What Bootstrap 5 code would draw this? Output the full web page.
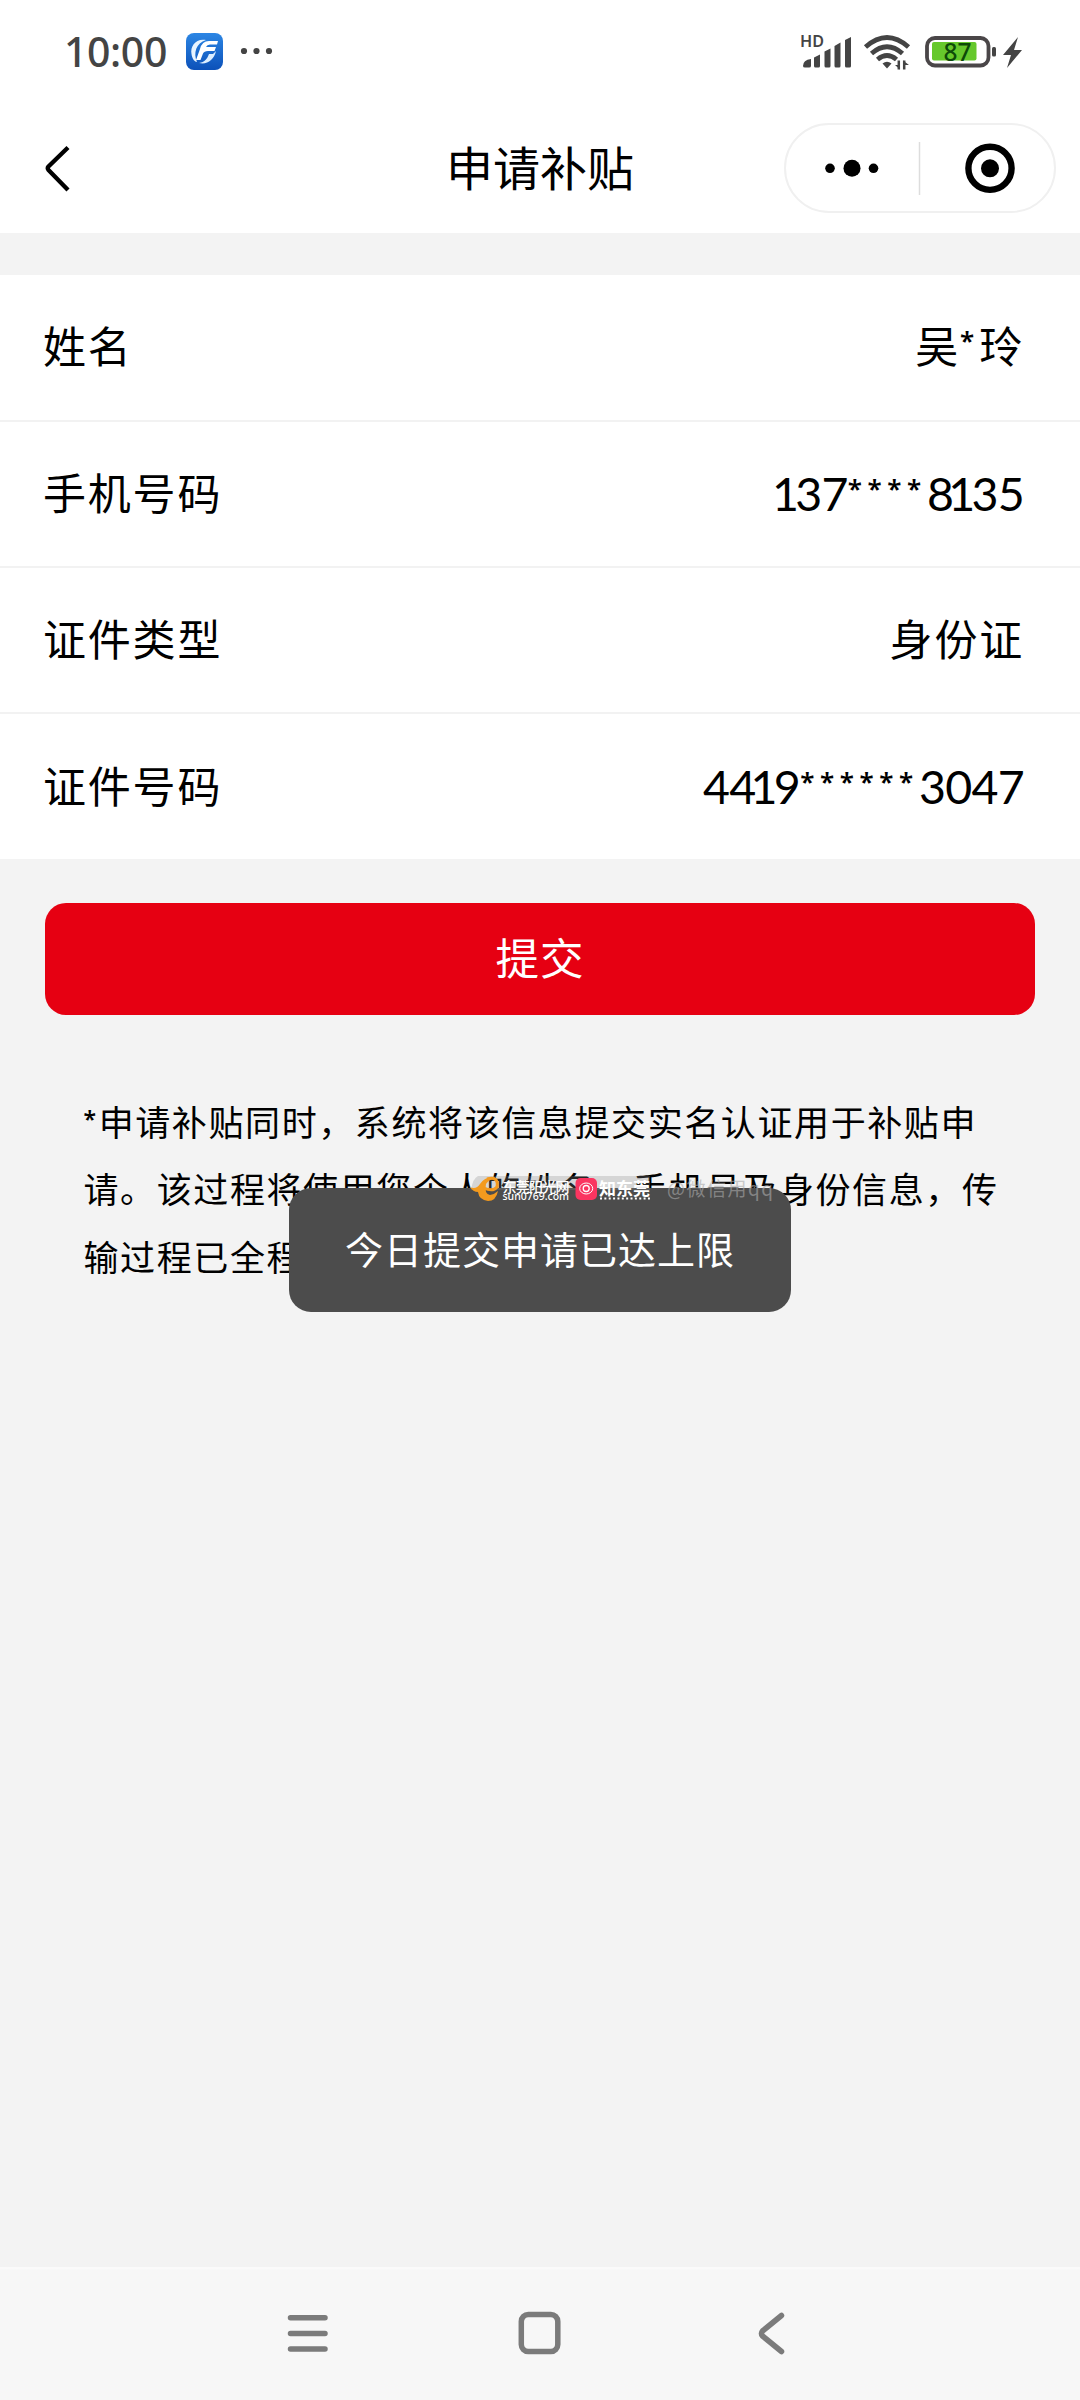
<!DOCTYPE html>
<html lang="zh-CN">
<head>
<meta charset="utf-8">
<meta name="viewport" content="width=device-width, initial-scale=1">
<title>申请补贴</title>
<link rel="stylesheet" href="https://cdn.jsdelivr.net/npm/bootstrap@5.3.0/dist/css/bootstrap.min.css">
<style>
body{background:#f3f3f3;color:#000;font-family:"Noto Sans CJK SC",sans-serif;line-height:1}
.screen{width:1080px;height:2400px;overflow:hidden}
.status{height:103px;padding:0 56px 0 64px}
.clock{font:500 41px/60px "Noto Sans",sans-serif;color:#444;width:122px;letter-spacing:-.4px;padding-bottom:2px}
.titlebar{height:130px;padding:0 24px 0 44px}
.side{flex:1 1 0}
.page-title{font-size:47px;line-height:60px;white-space:nowrap;padding:0 0 4px;margin-left:-20px}
.capsule{width:272px;height:90px;border:2px solid #f0f0f0}
.form-rows{margin-top:42px}
.form-rows .list-group-item{height:146px;padding:0 56px 6px 43px;border:0;border-bottom:2px solid #f2f2f2;font-size:43px;letter-spacing:1.8px;color:#000}
.form-rows .list-group-item:first-child{height:147px;padding-bottom:7px}
.form-rows .list-group-item:last-child{height:145px;border-bottom:0;padding-bottom:4px}
.digits{font-family:Lato,"Noto Sans CJK SC",sans-serif;font-size:46.5px;letter-spacing:-.7px;font-kerning:none;padding-top:4px}
.digits i,.star{font-style:normal;font-weight:600;font-family:"Noto Sans","Noto Sans CJK SC",sans-serif;font-size:26px;line-height:0;vertical-align:13px;letter-spacing:5.6px}
.star{letter-spacing:5px}
.notice .star{font-size:23px;vertical-align:8px;letter-spacing:2.6px}
.one{margin-left:-5px;margin-right:-3px}
.btn-send{height:112px;margin:44px 45px 0;padding:0 0 5px;border:0;border-radius:21px;background:#e60012;color:#fff;font-size:43.5px;letter-spacing:1px}
.btn-send:hover{background:#e60012;color:#fff}
.notice{margin:72px 0 0 83.500px;font-size:35px;line-height:67.3px;letter-spacing:1.6px;white-space:nowrap}
.hint{left:289px;top:1188px;width:502px;height:124px;padding-bottom:4px;border-radius:22px;background:#4c4c4c;color:#fff;font-size:38px;letter-spacing:1px}
.stamp{left:466px;top:1174px}
.sysbar{height:133px;background:#f7f7f7}
</style>
<script src="https://cdn.jsdelivr.net/npm/bootstrap@5.3.0/dist/js/bootstrap.bundle.min.js"></script>
</head>
<body>
<div class="screen position-relative d-flex flex-column">
  <header class="bg-white">
    <div class="status d-flex align-items-center">
      <span class="clock">10:00</span>
      <svg width="90" height="38" viewBox="186 33 90 38">
        <defs><linearGradient id="blue" x2="0" y2="1"><stop stop-color="#2c86e4"/><stop offset="1" stop-color="#0c51b9"/></linearGradient></defs>
        <rect x="186" y="33" width="37" height="37" rx="8" fill="url(#blue)"/>
        <path d="M206 40C196 38 190 46 191.500 54C192 59 195 62 197 62C193 53 196 43 206 40Z" fill="#e8f4ff"/>
        <path d="M218 41H209Q202 41 200 49L196 60H200.500L203 53.500Q204 51 208 51H214.500L216 47H206Q207 44.500 210 44.500H217Z" fill="#fff"/>
        <path d="M216 51C214 60 207 65 199 63C205 62 207 59 209 54H213Z" fill="#dceeff"/>
        <g fill="#444"><circle cx="244" cy="51" r="3.100"/><circle cx="256.500" cy="51" r="3.100"/><circle cx="269" cy="51" r="3.100"/></g>
      </svg>
      <svg class="ms-auto overflow-visible" width="224" height="40" viewBox="800 32 224 40" fill="#444">
        <text x="800" y="47.300" font-family="Noto Sans,sans-serif" font-weight="600" font-size="16" textLength="24" lengthAdjust="spacingAndGlyphs">HD</text>
        <path d="M803 66Q803 60 811 59V66Q811 67.500 809 67.500H805Q803 67.500 803 66ZM814 57.500L820 54.500V66Q820 67.500 818.500 67.500H815.500Q814 67.500 814 66ZM824.500 51.500L830.500 48.500V66Q830.500 67.500 829 67.500H826Q824.500 67.500 824.500 66ZM834.500 46L840.500 42.500V66Q840.500 67.500 839 67.500H836Q834.500 67.500 834.500 66ZM845 40L851 37V66Q851 67.500 849.500 67.500H846.500Q845 67.500 845 66Z"/>
        <g fill="none" stroke="#444" stroke-width="4.800"><path d="M865.500 47Q887 28 908.500 47"/><path d="M871.500 53.500Q887 40 902.500 53.500"/><path d="M877.500 59.500Q887 51.500 896.500 59.500"/></g>
        <path d="M882.500 63.500Q887 60 891.500 63.500L887 68.500Z"/>
        <path d="M898.800 60.500V69.500M904.200 69.500V60.500" stroke="#444" stroke-width="2.500"/><path d="M895 65H900V69.500ZM903 60.500L909 65H903Z"/>
        <rect x="927" y="38" width="61.500" height="27.500" rx="8" fill="#fff" stroke="#4a4648" stroke-width="3.800"/>
        <rect x="932" y="42" width="44.500" height="18.500" rx="2" fill="#66c82c"/>
        <text x="943.500" y="60.500" font-family="Noto Sans,sans-serif" font-size="24.500" font-weight="500" fill="#0d4a08" textLength="28">87</text>
        <rect x="992" y="47" width="4" height="9.500" rx="1.500"/>
        <path d="M1018 37L1003 55H1011L1007 68L1022 50H1014Z"/>
      </svg>
    </div>
    <div class="titlebar d-flex align-items-center">
      <div class="side"><svg class="d-block" width="28" height="50" viewBox="44 143 28 50"><path d="M68 147.500L48.500 166.500Q47 168.300 48.500 170L68 190" fill="none" stroke="#000" stroke-width="4.300"/></svg></div>
      <div class="page-title">申请补贴</div>
      <div class="side"><div class="capsule rounded-pill ms-auto d-flex">
        <svg width="268" height="86" viewBox="787 125 268 86"><circle cx="831" cy="168.300" r="4.800"/><circle cx="853" cy="168.300" r="8.500"/><circle cx="874.500" cy="168.300" r="4.800"/><path d="M920.500 142V195" stroke="#ddd" stroke-width="1.500"/><circle cx="991" cy="168.300" r="21.600" fill="none" stroke="#000" stroke-width="6.400"/><circle cx="991" cy="168.300" r="9"/></svg>
      </div></div>
    </div>
  </header>

  <ul class="form-rows list-group list-group-flush">
    <li class="list-group-item d-flex justify-content-between align-items-center"><span>姓名</span><span>吴<span class="star">*</span>玲</span></li>
    <li class="list-group-item d-flex justify-content-between align-items-center"><span>手机号码</span><span class="digits"><span class="one">1</span>37<i>****</i>8<span class="one">1</span>35</span></li>
    <li class="list-group-item d-flex justify-content-between align-items-center"><span>证件类型</span><span>身份证</span></li>
    <li class="list-group-item d-flex justify-content-between align-items-center"><span>证件号码</span><span class="digits">44<span class="one">1</span>9<i>******</i>3047</span></li>
  </ul>

  <button type="button" class="btn btn-send">提交</button>
  <p class="notice"><span class="star">*</span>申请补贴同时，系统将该信息提交实名认证用于补贴申<br>请。该过程将使用您个人的姓名、手机号及身份信息，传<br>输过程已全程加密。</p>

  <div class="hint position-absolute d-flex align-items-center justify-content-center">今日提交申请已达上限</div>
  <svg class="stamp position-absolute" width="314" height="32" viewBox="466 1174 314 32" font-family="Noto Sans CJK SC,sans-serif">
    <path d="M478 1176H650V1190H471Q473 1178 478 1176Z" fill="#888" opacity=".28"/>
    <path d="M470 1187Q476 1190 480 1184Q487 1174 498 1179Q490 1178 486 1184Q484 1194 490 1195Q495 1194 498 1191Q496 1201 488 1201Q479 1200 478 1192Q473 1192 470 1187Z" fill="#f39a1e"/>
    <path d="M487 1179Q499 1176 497 1187Q493 1192 484 1188" fill="none" stroke="#f39a1e" stroke-width="3"/>
    <g fill="#fff"><text x="502.500" y="1191.500" font-size="14" font-weight="500" textLength="67">东莞阳光网</text>
    <text x="502.500" y="1200" font-family="Noto Sans,sans-serif" font-size="10.500" font-weight="500" textLength="66.500">sun0769.com</text></g>
    <rect x="575.500" y="1178" width="21.500" height="22" rx="5" fill="#fa3560"/>
    <g fill="none" stroke="#fff"><ellipse cx="586.200" cy="1188.500" rx="6.500" ry="5.500"/><circle cx="586.200" cy="1188.500" r="3" stroke-width="1.300"/></g>
    <text x="599" y="1194.500" font-size="17" font-weight="700" fill="#fff" textLength="51">知东莞</text>
    <path d="M600 1198.500H650" stroke="#fff" stroke-width="2" stroke-dasharray="2 2.360"/>
    <text x="667" y="1195.500" font-size="19" fill="#aaa" opacity=".6" textLength="106">@微信用qq</text>
  </svg>

  <footer class="sysbar mt-auto d-flex">
    <svg width="1080" height="133" viewBox="0 2267 1080 133" fill="none" stroke="#7b7b7b" stroke-width="5.500" stroke-linecap="round" stroke-linejoin="round">
      <path d="M0 2268H1080" stroke="#fafafa" stroke-width="3"/>
      <path d="M290.500 2317.700H325M290.500 2333.400H325M290.500 2349H325"/>
      <rect x="521.300" y="2314.500" width="36.500" height="37" rx="7"/>
      <path d="M781.500 2315.500L762.500 2331Q760.500 2333.400 762.500 2336L781.500 2351.500"/>
    </svg>
  </footer>
</div>
</body>
</html>
